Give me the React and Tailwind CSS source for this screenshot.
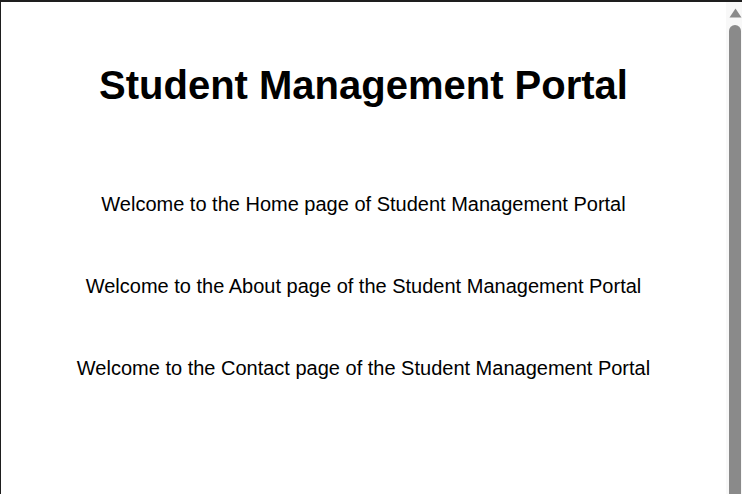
export default function App() {
  return (
    <div
      className="flex h-[494px] w-[742px] overflow-hidden border-t-2 border-l border-[#1e1e1e] bg-white text-black"
      style={{ fontFamily: "'Liberation Sans', Arial, sans-serif" }}
    >
      {/* Page content */}
      <div className="flex flex-1 flex-col items-center">
        <h1 className="mt-[59px] text-[40px] leading-[48px] font-bold">Student Management Portal</h1>
        <div className="mt-[81px] flex flex-col items-center gap-[54px] text-xl">
          <p>Welcome to the Home page of Student Management Portal</p>
          <p>Welcome to the About page of the Student Management Portal</p>
          <p>Welcome to the Contact page of the Student Management Portal</p>
        </div>
      </div>

      {/* Scrollbar */}
      <div className="flex w-[16px] flex-col items-center bg-[#f8f8f8] pt-[6px] pl-[2px]">
        <svg width="13" height="10" viewBox="0 0 13 10">
          <path d="M6.5 0.5 L12.5 9.5 L0.5 9.5 Z" fill="#8a8a8a" />
        </svg>
        <div className="mt-[7px] w-[12px] flex-1 rounded-t-[6px] bg-[#8a8a8a]" />
      </div>
    </div>
  );
}
